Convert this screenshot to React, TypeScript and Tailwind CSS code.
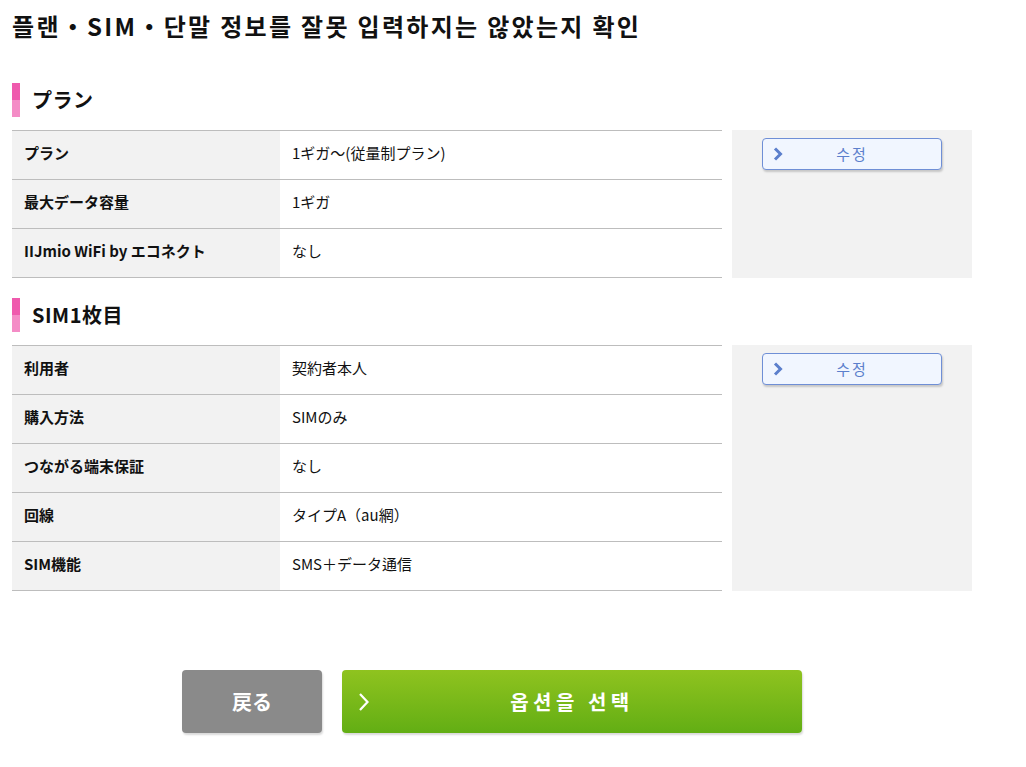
import React from "react";

const font = {
  fontFamily:
    '"Noto Sans CJK KR", "Noto Sans CJK JP", "Noto Sans", sans-serif',
};

type Row = { label: string; value: string };

const planRows: Row[] = [
  { label: "プラン", value: "1ギガ～(従量制プラン)" },
  { label: "最大データ容量", value: "1ギガ" },
  { label: "IIJmio WiFi by エコネクト", value: "なし" },
];

const simRows: Row[] = [
  { label: "利用者", value: "契約者本人" },
  { label: "購入方法", value: "SIMのみ" },
  { label: "つながる端末保証", value: "なし" },
  { label: "回線", value: "タイプA（au網）" },
  { label: "SIM機能", value: "SMS＋データ通信" },
];

function SectionHeading({ title }: { title: string }) {
  return (
    <div className="flex items-center h-[34px]">
      <div className="flex flex-col w-[8px] h-[34px]">
        <div className="flex-1 bg-[#ef5aad]" />
        <div className="flex-1 bg-[#f48cc6]" />
      </div>
      <h2 className="ml-[12px] text-[20px] font-bold text-[#111] leading-none tracking-[0.5px]">
        {title}
      </h2>
    </div>
  );
}

function EditButton() {
  return (
    <button className="relative flex items-center justify-center w-[180px] h-[32px] rounded-[4px] border border-[#6f8fd6] bg-[#f1f6ff] text-[#5c7fcc] text-[15px] tracking-[2px] shadow-[1px_2px_2px_rgba(0,0,0,0.18)]">
      <svg
        className="absolute left-[10px] top-[8px]"
        width="10"
        height="14"
        viewBox="0 0 10 14"
      >
        <path
          d="M2 1.5 L7.5 7 L2 12.5"
          fill="none"
          stroke="#5c7fcc"
          strokeWidth="3"
        />
      </svg>
      수정
    </button>
  );
}

function InfoTable({ rows }: { rows: Row[] }) {
  return (
    <div className="flex gap-[10px]">
      <div className="w-[710px] border-t border-[#bdbdbd]">
        {rows.map((r) => (
          <div
            key={r.label}
            className="flex h-[49px] border-b border-[#bdbdbd] text-[15px] text-[#111]"
          >
            <div className="w-[268px] bg-[#f2f2f2] flex items-center pl-[12px] pb-[3px] font-bold">
              {r.label}
            </div>
            <div className="flex-1 flex items-center pl-[12px] pb-[3px]">
              {r.value}
            </div>
          </div>
        ))}
      </div>
      <div className="w-[240px] bg-[#f2f2f2] pt-[8px] pl-[30px]">
        <EditButton />
      </div>
    </div>
  );
}

export default function App() {
  return (
    <div className="bg-white min-h-[767px] px-[12px]" style={font}>
      <h1 className="pt-[10px] text-[24px] font-bold text-[#111] leading-[32px] tracking-[2.3px]">
        플랜・SIM・단말 정보를 잘못 입력하지는 않았는지 확인
      </h1>

      <div className="mt-[41px]">
        <SectionHeading title="プラン" />
      </div>
      <div className="mt-[13px]">
        <InfoTable rows={planRows} />
      </div>

      <div className="mt-[20px]">
        <SectionHeading title="SIM1枚目" />
      </div>
      <div className="mt-[13px]">
        <InfoTable rows={simRows} />
      </div>

      <div className="flex gap-[20px] mt-[79px] ml-[170px]">
        <button className="w-[140px] h-[63px] rounded-[4px] bg-[#8a8a8a] text-white text-[20px] font-bold shadow-[1px_2px_2px_rgba(0,0,0,0.15)]">
          戻る
        </button>
        <button className="relative w-[460px] h-[63px] rounded-[4px] bg-gradient-to-b from-[#8fc31f] to-[#62ae14] text-white text-[20px] font-bold tracking-[4.5px] shadow-[1px_2px_2px_rgba(0,0,0,0.15)]">
          <svg
            className="absolute left-[16px] top-[22px]"
            width="12"
            height="20"
            viewBox="0 0 12 20"
          >
            <path
              d="M2 2 L9.5 10 L2 18"
              fill="none"
              stroke="white"
              strokeWidth="2.2"
            />
          </svg>
          옵션을 선택
        </button>
      </div>
    </div>
  );
}
